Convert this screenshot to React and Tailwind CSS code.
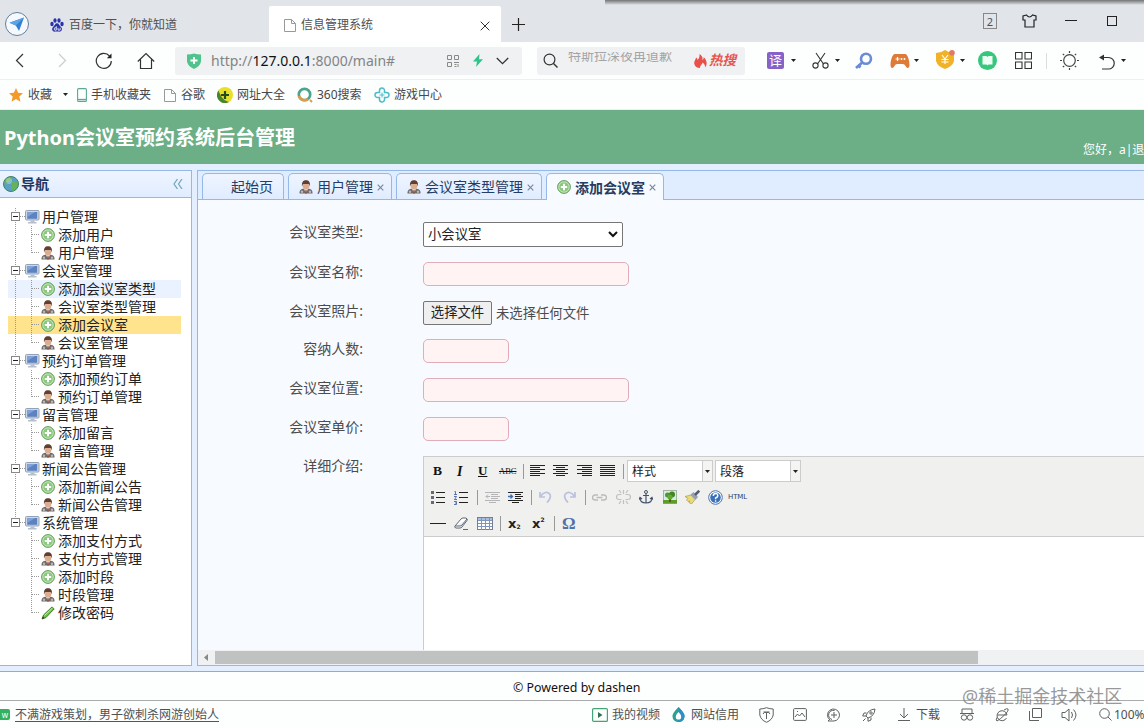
import React from "react";

/* ---------- small shared drawings ---------- */
const Svg = ({ w, h = w, vb, children, className = "" }) => (
  <svg width={w} height={h} viewBox={vb || `0 0 ${w} ${h}`} className={`block shrink-0 ${className}`} fill="none">
    {children}
  </svg>
);
const Cell = ({ c, children }) => <div className={`flex shrink-0 items-center ${c}`}>{children}</div>;
const Caret = () => (
  <Svg w={5} h={3}><path d="M0 0h5L2.500 3z" fill="#222" /></Svg>
);
const Doc = () => (
  <Svg w={12} h={14}>
    <path d="M.5 1.500h7l4 4v8H.5zM7.500 1.500v4h4" stroke="#999" />
  </Svg>
);
const AddIcon = () => (
  <Svg w={14}>
    <circle cx="7" cy="7" r="6.400" fill="#8cc780" stroke="#64a15a" />
    <circle cx="7" cy="7" r="5.200" stroke="#d3edcb" strokeWidth=".8" />
    <path d="M7 3.800v6.400M3.800 7h6.400" stroke="#fff" strokeWidth="2" />
  </Svg>
);
const UserIcon = () => (
  <Svg w={14}>
    <path d="M.5 13.500C.2 10.800 1.500 9.300 4 8.800h6c2.500.5 3.800 2 3.500 4.700z" fill="#6f6b68" />
    <path d="M5 9L7 13l2-4z" fill="#e9e4e0" />
    <path d="M6.500 10h1l.5 3.500H6z" fill="#8b5048" />
    <circle cx="3" cy="11.800" r="1.200" fill="#bdb8b3" /><circle cx="11" cy="11.800" r="1.200" fill="#bdb8b3" />
    <ellipse cx="7" cy="5.600" rx="3.400" ry="4" fill="#dcae91" />
    <path d="M3 6.200C2.600 2 4.200.2 7 .2s4.400 1.800 4 6L10 4H4z" fill="#5f4033" />
  </Svg>
);
const PcIcon = () => (
  <Svg w={15} h={14}>
    <rect x=".5" y=".5" width="13.500" height="9.500" rx="1" fill="#cfd8e6" stroke="#94a2b7" />
    <rect x="2.200" y="2" width="10" height="6.800" fill="#5c82c0" />
    <path d="M2.200 2h8l-8 5z" fill="#7fa2d8" />
    <path d="M5.500 10.500h4v1.500h2v1.500h-8.500V12h2.500z" fill="#b6bfcc" />
  </Svg>
);
const PencilIcon = () => (
  <Svg w={14}>
    <path d="M1 13l1.500-4L11 .9l2.200 2L5 11.500z" fill="#6fc043" stroke="#37732a" strokeWidth=".9" />
    <path d="M3.500 9.500l8-7.500" stroke="#c4efaa" /><path d="M1 13l1-2.500L3.600 12z" fill="#333" />
  </Svg>
);

/* ---------- browser chrome ---------- */
function WindowTabs() {
  return (
    <div className="relative flex h-[42px] shrink-0 items-center bg-[#e1e4e9] text-[12px] text-[#505050]">
      <div className="absolute left-[605px] right-0 top-0 h-[5px] bg-gradient-to-b from-[#747577] to-[#e1e4e9]" />
      <Cell c="w-[50px] pl-[4px] pt-[6px]">
        <Svg w={26}>
          <circle cx="13" cy="13" r="11.500" fill="#f5f9fd" stroke="#627f9d" />
          <path d="M5.500 11.700L20 6.500l-5 13.500-3.200-5.500z" fill="#3280d2" /><path d="M5.500 11.700L20 6.500l-8.200 8z" fill="#5ba4e5" />
        </Svg>
      </Cell>
      <Cell c="w-[19px] pt-[8px]">
        <Svg w={14}>
          <ellipse cx="2" cy="6" rx="1.700" ry="2.200" fill="#2932a8" /><ellipse cx="5" cy="2.500" rx="1.600" ry="2.300" fill="#2932a8" />
          <ellipse cx="9" cy="2.500" rx="1.600" ry="2.300" fill="#2932a8" /><ellipse cx="12" cy="6" rx="1.700" ry="2.200" fill="#2932a8" />
          <path d="M7 5.300c2 0 2 2 3.700 3.500 3 2.700 0 5.500-2.200 4.800-1-.3-2-.3-3 0-2.300.6-5-2.200-2.200-4.800C5 7.300 5 5.300 7 5.300z" fill="#2932a8" />
          <path d="M6.300 8.200v4H4.700q-1.200-1.200 0-2.400h1.600M8 9.800v2.300h2.200V9.800" stroke="#fff" strokeWidth=".8" />
        </Svg>
      </Cell>
      <Cell c="w-[200px] pt-[7px]"><span>百度一下，你就知道</span></Cell>
      <div className="mt-[6px] flex h-[36px] w-[232px] shrink-0 items-center rounded-t-[2px] bg-white">
        <Cell c="w-[32px] pl-[15px] pt-[2px]"><Doc /></Cell>
        <Cell c="w-[179px] pt-[2px]">信息管理系统</Cell>
        <Cell c="w-[20px] pt-[3px]"><Svg w={10}><path d="M.7.7l8.600 8.600M9.300.7L.7 9.300" stroke="#333" /></Svg></Cell>
      </div>
      <Cell c="w-[482px] pl-[11px] pt-[7px]"><Svg w={13}><path d="M6.500 0v13M0 6.500h13" stroke="#222" strokeWidth="1.200" /></Svg></Cell>
      <Cell c="w-[39px]"><span className="flex h-[16px] w-[14px] items-center justify-center border border-[#888] text-[11px] leading-none">2</span></Cell>
      <Cell c="w-[43px]">
        <Svg w={15} h={14}><path d="M4.500 1L1 2v4h2v7h9V6h2V2l-3.500-1Q9 3 7.500 3T4.500 1z" stroke="#222" strokeWidth="1.200" /></Svg>
      </Cell>
      <Cell c="w-[42px]"><Svg w={12} h={2}><path d="M0 .5h12" stroke="#222" /></Svg></Cell>
      <Cell c="w-[12px]"><span className="h-[10px] w-[10px] border border-[#222]" /></Cell>
    </div>
  );
}

function AddressRow() {
  return (
    <div className="flex h-[38px] shrink-0 items-center border-b border-[#eeeff1] bg-[#fdfefe]">
      <Cell c="w-[42px] pl-[15px]"><Svg w={9} h={15}><path d="M8 1L1.500 7.500 8 14" stroke="#333" strokeWidth="1.200" /></Svg></Cell>
      <Cell c="w-[53px] pl-[16px]"><Svg w={9} h={15}><path d="M1 1l6.500 6.500L1 14" stroke="#ccc" strokeWidth="1.200" /></Svg></Cell>
      <Cell c="w-[42px]">
        <Svg w={18}><path d="M14.500 4A7.500 7.500 0 1 0 16.300 9" stroke="#333" strokeWidth="1.200" /><path d="M16.500 1.500v4.700h-4.700z" fill="#222" /></Svg>
      </Cell>
      <Cell c="w-[38px]">
        <Svg w={18}><path d="M.8 9.500L9 1.500l8.200 8M3.500 7.500v9h11v-9" stroke="#333" strokeWidth="1.200" /></Svg>
      </Cell>
      <div className="flex h-[28px] w-[347px] shrink-0 items-center rounded-[3px] bg-[#f0f1f2]">
        <Cell c="w-[36px] pl-[12px]">
          <Svg w={14} h={16}><path d="M0 1.500Q4 1.500 7 .5q3 1 7 1v7Q13 13.500 7 16 1 13.500 0 8.500z" fill="#50c38c" /><path d="M7 4v7M3.500 7.500h7" stroke="#fff" strokeWidth="1.800" /></Svg>
        </Cell>
        <Cell c="w-[236px]"><span className="whitespace-nowrap text-[14px] text-[#828486]">http://<span className="text-[#111]">127.0.0.1</span>:8000/main#</span></Cell>
        <Cell c="w-[26px]">
          <Svg w={12}>
            <path d="M.5.5h4v4h-4zM7.500.5h4v4h-4zM.5 7.500h4v4h-4zM7 7.500h5M7.500 9.500h2M11 9v3M7.500 11.500h2" stroke="#888" />
          </Svg>
        </Cell>
        <Cell c="w-[23px]"><Svg w={10} h={13}><path d="M6.500 0L0 7.500h4L3 13l7-7.800H6z" fill="#2ec58a" /></Svg></Cell>
        <Cell c="w-[14px]"><Svg w={13} h={8}><path d="M.8 1l5.700 5.700L12.200 1" stroke="#333" strokeWidth="1.300" /></Svg></Cell>
      </div>
      <div className="ml-[15px] flex h-[28px] w-[208px] shrink-0 items-center rounded-[3px] bg-[#f0f1f2]">
        <Cell c="w-[31px] pl-[6px]"><Svg w={15}><circle cx="6.500" cy="6.500" r="5.400" stroke="#333" strokeWidth="1.200" /><path d="M10.500 10.500l4 4" stroke="#333" strokeWidth="1.400" /></Svg></Cell>
        <div className="mb-[7px] flex h-[10px] w-[126px] shrink-0 items-end overflow-hidden text-[13px] leading-[13px] text-[#a2a4a6]">特斯拉深夜再道歉</div>
        <Cell c="w-[15px]"><Svg w={13} h={14}><path d="M5.500 0c3 2 3.500 4 2.700 6C9.500 5.500 10 4 9.500 3 12.500 5.500 14 10 11 13.500c.3-2.500-1-4-2.500-5C8.500 10.500 6 11 6 14c-3 0-5-1.500-5.700-4C-.3 7 2 5.500 2 3.500c1 .5 1.500 1.500 1.500 2.500C5 4.500 5.800 2.500 5.500 0z" fill="#e8504c" /></Svg></Cell>
        <span className="whitespace-nowrap pt-[1px] text-[13.500px] font-bold italic leading-none text-[#e65550]">热搜</span>
      </div>
      <Cell c="w-[45px] pl-[22px]"><span className="flex h-[17px] w-[17px] items-center justify-center rounded-[2px] bg-[#8763c8] text-[13px] leading-none text-white">译</span></Cell>
      <Cell c="w-[22px] pl-[1px]"><Caret /></Cell>
      <Cell c="w-[23px]">
        <Svg w={17}><path d="M4 1l7.500 11M13 1L5.500 12" stroke="#333" strokeWidth="1.100" /><circle cx="3.500" cy="13.500" r="2.600" stroke="#333" strokeWidth="1.100" /><circle cx="13.500" cy="13.500" r="2.600" stroke="#333" strokeWidth="1.100" /></Svg>
      </Cell>
      <Cell c="w-[20px]"><Caret /></Cell>
      <Cell c="w-[35px]">
        <Svg w={18}><circle cx="11" cy="6.800" r="5" stroke="#6b8bd4" strokeWidth="2.600" /><path d="M7.500 10.300L1 16M3.500 13.500l2 2" stroke="#6b8bd4" strokeWidth="2.800" /></Svg>
      </Cell>
      <Cell c="w-[24px]">
        <Svg w={20} h={16}><path d="M5 1h10c3 0 4.500 7.500 4.500 11 0 3.500-2.500 4-4 1Q14.500 11 13 11H7Q5.500 11 4.500 13c-1.500 3-4 2.500-4-1C.5 8.500 2 1 5 1z" fill="#df7b39" /><path d="M7.500 4v4M5.500 6h4" stroke="#fff" strokeWidth="1.200" /><circle cx="11.500" cy="6" r="1" fill="#fff" /><circle cx="14.500" cy="6" r="1" fill="#fff" /></Svg>
      </Cell>
      <Cell c="w-[22px]"><Caret /></Cell>
      <Cell c="w-[24px] pb-[2px]">
        <Svg w={19}><path d="M0 3Q5 3 9 0q4 3 9 3v8q-1.500 5.500-9 8Q1.500 16.500 0 11z" fill="#f1b229" /><path d="M6 5l3 4 3-4M9 9v5M5.500 9.500h7M5.500 12h7" stroke="#fff" strokeWidth="1.100" /><circle cx="16" cy="2.800" r="2.800" fill="#df7a63" /></Svg>
      </Cell>
      <Cell c="w-[18px]"><Caret /></Cell>
      <Cell c="w-[37px]">
        <Svg w={19}><circle cx="9.500" cy="9.500" r="9.500" fill="#35c77c" /><path d="M4.500 5h4l1 1 1-1h4v8.500h-4l-1 1-1-1h-4z" fill="#f0fff6" /></Svg>
      </Cell>
      <Cell c="w-[31px]"><Svg w={17}><path d="M.5.5h6.500V7H.5zM10 .5h6.500V7H10zM.5 10h6.500v6.500H.5zM10 10h6.500v6.500H10z" stroke="#333" strokeWidth="1.100" /></Svg></Cell>
      <Cell c="w-[14px]"><span className="h-[16px] w-px bg-[#ddd]" /></Cell>
      <Cell c="w-[39px]">
        <Svg w={19}><circle cx="9.500" cy="9.500" r="5.800" stroke="#444" strokeWidth="1.200" /><path d="M9.500 0v2M9.500 17v2M0 9.500h2M17 9.500h2M2.800 2.800l1.400 1.400M14.800 14.800l1.400 1.400M16.200 2.800l-1.400 1.400M4.200 14.800l-1.400 1.400" stroke="#444" strokeWidth="1.200" /></Svg>
      </Cell>
      <Cell c="w-[22px] pt-[2px]"><Svg w={17} h={16}><path d="M2 3.500h7.500a5.700 5.700 0 0 1 0 11.500H3" stroke="#333" strokeWidth="1.200" /><path d="M5 .5v6L0 3.500z" fill="#333" /></Svg></Cell>
      <Caret />
    </div>
  );
}

function Bookmarks() {
  return (
    <div className="flex h-[30px] shrink-0 items-center whitespace-nowrap border-b border-[#dff6f3] bg-[#fdfefe] text-[12px] text-[#484848]">
      <Cell c="w-[28px] pl-[9px]"><Svg w={14}><path d="M7 0l2.100 4.700 4.900.5-3.700 3.300 1.100 5.200L7 11l-4.400 2.700 1.100-5.200L0 5.200l4.900-.5z" fill="#f39a28" /></Svg></Cell>
      <Cell c="w-[35px]">收藏</Cell>
      <Cell c="w-[14px]"><Caret /></Cell>
      <Cell c="w-[14px]"><Svg w={10} h={14}><rect x=".6" y=".6" width="8.800" height="12.800" rx="1" stroke="#5ba993" strokeWidth="1.100" /><path d="M1 11.500h8" stroke="#5ba993" strokeWidth="1.300" /></Svg></Cell>
      <Cell c="w-[73px]">手机收藏夹</Cell>
      <Cell c="w-[17px]"><Doc /></Cell>
      <Cell c="w-[36px]">谷歌</Cell>
      <Cell c="w-[20px]">
        <Svg w={16}><circle cx="8" cy="8" r="8" fill="#e9df29" /><path d="M1.500 3.500A8 8 0 0 0 12 15c-4-1-8-4-10.500-11.500z" fill="#48842b" /><path d="M8 4v8M4 8h8" stroke="#244b20" strokeWidth="2.200" /></Svg>
      </Cell>
      <Cell c="w-[60px]">网址大全</Cell>
      <Cell c="w-[20px]">
        <Svg w={16}><circle cx="7.500" cy="7.500" r="5.700" stroke="#4ba58e" strokeWidth="2.700" /><path d="M2 9a5.700 5.700 0 0 0 9 3" stroke="#e29a48" strokeWidth="2.700" /><path d="M13 13l2 2" stroke="#e29a48" strokeWidth="2" /></Svg>
      </Cell>
      <Cell c="w-[57px]">360搜索</Cell>
      <Cell c="w-[20px]"><Svg w={16}><path d="M5.500 5.500V3.500a2.500 2.500 0 0 1 5 0v2h2a2.500 2.500 0 0 1 0 5h-2v2a2.500 2.500 0 0 1-5 0v-2h-2a2.500 2.500 0 0 1 0-5z" stroke="#4dbcc6" strokeWidth="1.500" /><path d="M8 5.500v5M5.500 8h5" stroke="#4dbcc6" /></Svg></Cell>
      <Cell c="w-[60px]">游戏中心</Cell>
    </div>
  );
}

/* ---------- navigation tree ---------- */
const TREE = [
  ["用户管理", [["添加用户", "add"], ["用户管理", "user"]]],
  ["会议室管理", [["添加会议室类型", "add", "hover"], ["会议室类型管理", "user"], ["添加会议室", "add", "active"], ["会议室管理", "user"]]],
  ["预约订单管理", [["添加预约订单", "add"], ["预约订单管理", "user"]]],
  ["留言管理", [["添加留言", "add"], ["留言管理", "user"]]],
  ["新闻公告管理", [["添加新闻公告", "add"], ["新闻公告管理", "user"]]],
  ["系统管理", [["添加支付方式", "add"], ["支付方式管理", "user"], ["添加时段", "add"], ["时段管理", "user"], ["修改密码", "pencil"]]],
];
const ROW_BG = { hover: "bg-[#eaf2ff]", active: "bg-[#ffe48d]" };
const ICONS = { add: AddIcon, user: UserIcon, pencil: PencilIcon };

function Parent({ label, last }) {
  return (
    <div className="flex h-[18px] items-center">
      <Svg w={17} h={18}>
        <path d={last ? "M7.500 0v9" : "M7.500 0v18"} stroke="#999" strokeDasharray="1 1" />
        <path d="M12 8.500h5" stroke="#999" strokeDasharray="1 1" />
        <rect x="3.500" y="4.500" width="8" height="8" fill="#fff" stroke="#888" />
        <path d="M5 8.500h5" stroke="#222" />
      </Svg>
      <PcIcon />
      <span className="ml-[2px]">{label}</span>
    </div>
  );
}
function Child({ item, lastGroup, lastChild }) {
  const Icon = ICONS[item[1]];
  return (
    <div className={`flex h-[18px] items-center ${ROW_BG[item[2]] || ""}`}>
      <Svg w={33} h={18}>
        {!lastGroup && <path d="M7.500 0v18" stroke="#999" strokeDasharray="1 1" />}
        <path d={lastChild ? "M23.500 0v9" : "M23.500 0v18"} stroke="#999" strokeDasharray="1 1" />
        <path d="M24 8.500h8" stroke="#999" strokeDasharray="1 1" />
      </Svg>
      <Icon />
      <span className="ml-[3px]">{item[0]}</span>
    </div>
  );
}
function Sidebar() {
  return (
    <div className="flex w-[192px] shrink-0 flex-col border-y border-r border-[#95b8e7] bg-white">
      <div className="flex h-[27px] shrink-0 items-center border-b border-[#95b8e7] bg-gradient-to-b from-[#eff5ff] to-[#e0ecff] text-[14px] font-bold text-[#1a3763]">
        <Cell c="w-[21px] pl-[3px]">
          <Svg w={16}><circle cx="8" cy="8" r="7.500" fill="#5a9fc4" stroke="#3f8360" /><path d="M3 3q3-3 6-1L7 5 4 6 3 9 1 8zM8 7l4-2 3 2-1 5-4 3-2-3z" fill="#63b35a" /><circle cx="6" cy="5" r="3" fill="#fff" opacity=".3" /></Svg>
        </Cell>
        <Cell c="w-[152px] pb-[2px]">导航</Cell>
        <Svg w={10}><path d="M4.500 0L1 5l3.500 5M9 0L5.500 5 9 10" stroke="#6ba6b9" strokeWidth="1.200" /></Svg>
      </div>
      <div className="ml-[8px] mr-[10px] mt-[10px] text-[14px] leading-[18px] text-[#222]">
        {TREE.map(([label, kids], g) => (
          <div key={g}>
            <Parent label={label} last={g === TREE.length - 1} />
            {kids.map((k, i) => (
              <Child key={i} item={k} lastGroup={g === TREE.length - 1} lastChild={i === kids.length - 1} />
            ))}
          </div>
        ))}
      </div>
    </div>
  );
}

/* ---------- content ---------- */
const TAB = "flex h-[26px] shrink-0 items-center whitespace-nowrap rounded-t-[5px] border border-b-0 border-[#95b8e7] bg-gradient-to-b from-[#eff5ff] to-[#e0ecff] text-[14px] text-[#253c63]";
const TabClose = () => <Svg w={7} className="ml-[4px] mt-[1px]"><path d="M.7.7l5.600 5.600M6.300.7L.7 6.300" stroke="#76839a" strokeWidth="1.100" /></Svg>;
function PageTabs() {
  return (
    <div className="flex h-[29px] shrink-0 items-end border-b border-[#95b8e7] bg-[#e0ecff] pl-[4px]">
      <div className={`${TAB} w-[82px] pl-[28px]`}>起始页</div>
      <div className={`${TAB} ml-[4px] w-[104px] pl-[10px]`}><UserIcon /><span className="ml-[4px]">用户管理</span><TabClose /></div>
      <div className={`${TAB} ml-[4px] w-[146px] pl-[10px]`}><UserIcon /><span className="ml-[4px]">会议室类型管理</span><TabClose /></div>
      <div className="-mb-px ml-[4px] flex h-[27px] w-[118px] shrink-0 items-center whitespace-nowrap rounded-t-[5px] border border-b-0 border-[#95b8e7] bg-[#f7faff] pl-[10px] text-[14px] font-bold text-[#253c63]">
        <AddIcon /><span className="ml-[4px]">添加会议室</span><TabClose />
      </div>
    </div>
  );
}

const Field = ({ label, h, children }) => (
  <div className={`flex shrink-0 items-start ${h}`}>
    <div className="w-[165px] shrink-0 text-right text-[14px] leading-[20px] text-[#4c4c4c]">{label}</div>
    <div className="ml-[60px] flex min-w-0 flex-1">{children}</div>
  </div>
);
const PINK = "rounded-[5px] border border-[#e0adb9] bg-[#fff3f3] outline-none";

const Sep = () => <span className="h-[15px] w-px bg-[#999]" />;
const Lines = ({ widths, side = "l", w = 15, color = "#222" }) => (
  <Svg w={w} h={12}>
    {widths.map((n, i) => {
      const x = side === "l" ? 0 : side === "r" ? w - n : Math.floor((w - n) / 2);
      return <path key={i} d={`M${x} ${i * 2 + 0.5}h${n}`} stroke={color} />;
    })}
  </Svg>
);
const Combo = ({ children }) => (
  <div className="flex h-[22px] w-[86px] items-stretch border border-[#ccc] bg-white text-[12px] text-[#222]">
    <span className="flex flex-1 items-center pl-[4px]">{children}</span>
    <span className="flex w-[10px] items-center justify-center border-l border-[#ccc] bg-[#f4f4f2]"><Caret /></span>
  </div>
);

function Editor() {
  return (
    <div className="flex h-[194px] w-full flex-col border-l border-t border-[#ccc] bg-white">
      <div className="h-[80px] shrink-0 border-b border-[#ccc] bg-[#f0f0ee] pt-[1px]">
        <div className="flex h-[26px] items-center font-['Liberation_Serif'] text-[#111]">
          <Cell c="w-[23px] pl-[9px] text-[13.500px] font-black">B</Cell>
          <Cell c="w-[24px] pl-[10px] text-[14px] font-bold italic">I</Cell>
          <Cell c="w-[24px] pl-[7px] text-[13px] font-bold underline">U</Cell>
          <Cell c="w-[28px] pl-[4px] text-[8.500px] line-through">ABC</Cell>
          <Cell c="w-[7px]"><Sep /></Cell>
          <Cell c="w-[23px]"><Lines widths={[15, 10, 15, 10, 15, 10]} /></Cell>
          <Cell c="w-[24px]"><Lines widths={[15, 9, 15, 9, 15, 9]} side="c" /></Cell>
          <Cell c="w-[23px]"><Lines widths={[15, 10, 15, 10, 15, 10]} side="r" /></Cell>
          <Cell c="w-[23px]"><Lines widths={[15, 15, 15, 15, 15, 15]} /></Cell>
          <Cell c="w-[4px]"><Sep /></Cell>
          <div className="flex gap-[2px] font-['Noto_Sans_CJK_SC',sans-serif]"><Combo>样式</Combo><Combo>段落</Combo></div>
        </div>
        <div className="flex h-[26px] items-center">
          <Cell c="w-[30px] pl-[7px]">
            <Svg w={14} h={13}><path d="M5 1.500h9M5 6.500h9M5 11.500h9" stroke="#222" /><path d="M0 0h3v3H0zM0 5h3v3H0zM0 10h3v3H0z" fill="#666a72" /></Svg>
          </Cell>
          <Cell c="w-[23px]">
            <Svg w={14} h={15}><path d="M5 2.500h9M5 7.500h9M5 12.500h9" stroke="#222" /><path d="M.5 1.500h1v3M0 4.500h3M0 6.500h2.500L.5 9.500H3M0 11.500h2.500v3H0M1 13h1" stroke="#4a65a1" strokeWidth=".9" /></Svg>
          </Cell>
          <Cell c="w-[8px]"><Sep /></Cell>
          <Cell c="w-[23px]">
            <Svg w={15} h={13}><path d="M0 1.500h15M6 3.500h7M6 5.500h9M6 7.500h7M0 9.500h15M4 11.500h7M1 5.500h4M3 3.500L1 5.500l2 2" stroke="#b5b5b8" /></Svg>
          </Cell>
          <Cell c="w-[23px]">
            <Svg w={15} h={13}><path d="M0 1.500h15M7 3.500h6M7 5.500h8M7 7.500h6M0 9.500h15M4 11.500h7" stroke="#222" /><path d="M0 5.500h4M2.500 3.500l2 2-2 2" stroke="#426eb0" strokeWidth="1.300" /></Svg>
          </Cell>
          <Cell c="w-[8px]"><Sep /></Cell>
          <Cell c="w-[24px]"><Svg w={13} h={12}><path d="M1 1v5h5M1.500 5.500C4 1 9 0 11 3.500c1.500 3.500-1 6-3 8" stroke="#bbc1df" strokeWidth="1.700" /></Svg></Cell>
          <Cell c="w-[22px]"><Svg w={13} h={12}><path d="M12 1v5H7M11.500 5.500C9 1 4 0 2 3.500.5 7 3 9.500 5 11.500" stroke="#bbc1df" strokeWidth="1.700" /></Svg></Cell>
          <Cell c="w-[7px]"><Sep /></Cell>
          <Cell c="w-[24px]"><Svg w={15} h={9}><path d="M6 2H3a2.500 2.500 0 0 0 0 5h3M9 2h3a2.500 2.500 0 0 1 0 5H9M4.500 4.500h6" stroke="#bbb" strokeWidth="1.400" /></Svg></Cell>
          <Cell c="w-[23px]"><Svg w={15} h={14}><path d="M5.500 4.500H3a2.500 2.500 0 0 0 0 5h2.500M9.500 4.500H12a2.500 2.500 0 0 1 0 5H9.500M7.500 0v4M7.500 10v4M3 0l2 3M12 0l-2 3M3 14l2-3M12 14l-2-3" stroke="#c0c0c0" strokeWidth="1.200" /></Svg></Cell>
          <Cell c="w-[24px]">
            <Svg w={14}><circle cx="7" cy="2" r="1.500" stroke="#44536c" /><path d="M7 3.500V13M4 5.500h6M1 8c0 3.500 3 5 6 5s6-1.500 6-5M0 9.500L1 7.500l2 1.500M14 9.500l-1-2L11 9" stroke="#44536c" strokeWidth="1.200" /></Svg>
          </Cell>
          <Cell c="w-[22px]">
            <Svg w={14}><rect x=".5" y=".5" width="13" height="13" fill="#d6eaf0" stroke="#a3b59f" /><rect y="10" width="14" height="3.500" fill="#5c9c27" /><path d="M7 7v5" stroke="#63512a" strokeWidth="2" /><circle cx="4.500" cy="5" r="2.500" fill="#4f972b" /><circle cx="9" cy="4.500" r="3" fill="#3f8622" /><circle cx="7" cy="7" r="2.600" fill="#62a932" /></Svg>
          </Cell>
          <Cell c="w-[23px]">
            <Svg w={15} h={14}><path d="M0 6.500L6 5l4 4.500L6.500 14 4 12.500l1-1.500-2 .5L1.500 10 3 8.500z" fill="#eadb76" stroke="#a99a4f" strokeWidth=".7" /><path d="M5.500 4.500l5 5.500 2.500-3L8.500 2z" fill="#97a0b2" /><path d="M10 5L14.300.7" stroke="#525d73" strokeWidth="2.600" /></Svg>
          </Cell>
          <Cell c="w-[20px]">
            <Svg w={15}><circle cx="7.500" cy="7.500" r="6.800" fill="#fff" stroke="#4a72ae" /><circle cx="7.500" cy="7.500" r="5.300" fill="#3970bc" /><path d="M5.300 6q0-2.500 2.300-2.500T9.800 6q0 1-2.200 2v1.200M7.600 10.300v1.500" stroke="#fff" strokeWidth="1.400" /></Svg>
          </Cell>
          <span className="font-['DejaVu_Sans'] text-[7px] leading-none tracking-[-0.1px] text-[#29436c]">HTML</span>
        </div>
        <div className="flex h-[26px] items-center">
          <Cell c="w-[30px] pl-[6px]"><Svg w={16} h={1}><path d="M0 .5h16" stroke="#222" /></Svg></Cell>
          <Cell c="w-[23px]"><Svg w={15} h={13}><path d="M1 9l6-7q1-1 2-1h3q2 1 1 2.500L8 10q-1 1-2 1H2Q0 10.500 1 9zM1.500 9H6q1 0 2-1l5-6M9 12.500h5" stroke="#5e6675" fill="#fff" /></Svg></Cell>
          <Cell c="w-[23px]">
            <Svg w={16} h={13}><rect x=".5" y=".5" width="15" height="12" fill="#fff" stroke="#718096" /><path d="M1 1h14v2H1z" fill="#a9bfde" /><path d="M1 3.500h14M1 6.500h14M1 9.500h14M4.500 1v12M8.500 1v12M12.500 1v12" stroke="#8095bd" /></Svg>
          </Cell>
          <Cell c="w-[8px]"><Sep /></Cell>
          <Cell c="w-[24px] font-['DejaVu_Sans'] text-[13px] font-bold leading-none text-[#222]">x<span className="translate-y-[4px] text-[6px]">2</span></Cell>
          <Cell c="w-[22px] font-['DejaVu_Sans'] text-[13px] font-bold leading-none text-[#222]">x<span className="-translate-y-[3px] text-[6px]">2</span></Cell>
          <Cell c="w-[8px]"><Sep /></Cell>
          <span className="font-['Liberation_Serif'] text-[17px] font-bold leading-none text-[#5470a6]">Ω</span>
        </div>
      </div>
    </div>
  );
}

function Content() {
  return (
    <div className="ml-[5px] flex min-w-0 flex-1 flex-col overflow-hidden border-y border-l border-[#95b8e7] bg-[#f7faff]">
      <PageTabs />
      <div className="flex min-h-0 flex-1 flex-col overflow-hidden pt-[22px]">
        <Field label="会议室类型:" h="h-[40px]">
          <div className="flex h-[25px] w-[200px] items-center justify-between rounded-[2px] border border-[#767676] bg-white pl-[4px] pr-[4px] text-[13.333px] text-[#222]">
            小会议室<Svg w={10} h={7}><path d="M1 1l4 4 4-4" stroke="#111" strokeWidth="2" /></Svg>
          </div>
        </Field>
        <Field label="会议室名称:" h="h-[39px]"><input className={`${PINK} h-[24px] w-[206px]`} /></Field>
        <Field label="会议室照片:" h="h-[38px]">
          <div className="flex items-center text-[13.333px] leading-none text-[#4c4c4c]">
            <button className="h-[24px] w-[69px] rounded-[2px] border border-[#767676] bg-[#efefef] text-[#222]">选择文件</button>
            <span className="ml-[4px] pt-[1px]">未选择任何文件</span>
          </div>
        </Field>
        <Field label="容纳人数:" h="h-[39px]"><input className={`${PINK} h-[24px] w-[86px]`} /></Field>
        <Field label="会议室位置:" h="h-[39px]"><input className={`${PINK} h-[24px] w-[206px]`} /></Field>
        <Field label="会议室单价:" h="h-[39px]"><input className={`${PINK} h-[24px] w-[86px]`} /></Field>
        <Field label="详细介绍:" h="h-[194px]"><Editor /></Field>
      </div>
      <div className="flex h-[15px] shrink-0 items-center bg-[#f0f1f2]">
        <Cell c="w-[17px] pl-[6px]"><Svg w={4} h={7}><path d="M4 0v7L0 3.500z" fill="#888" /></Svg></Cell>
        <div className="h-[13px] w-[763px] bg-[#c0c1c1]" />
      </div>
    </div>
  );
}

function StatusBar() {
  const s = { stroke: "#606060", strokeWidth: 1 };
  return (
    <div className="flex h-[28px] shrink-0 items-center whitespace-nowrap border-t border-[#aaabac] bg-[#fdfefe] text-[12px] text-[#505050]">
      <Cell c="w-[15px]"><span className="flex h-[11px] w-[10px] items-center justify-center rounded-r-[2px] bg-[#32b15f] text-[8px] leading-none text-white">w</span></Cell>
      <Cell c="w-[577px]"><span className="border-b border-[#555] leading-[13px]">不满游戏策划，男子欲刺杀网游创始人</span></Cell>
      <Cell c="w-[20px]"><Svg w={16} h={14}><rect x=".6" y=".6" width="14.800" height="12.800" rx="1" stroke="#46a575" strokeWidth="1.200" /><path d="M6 4l4.500 3L6 10z" fill="#32704f" /></Svg></Cell>
      <Cell c="w-[60px]">我的视频</Cell>
      <Cell c="w-[19px]"><Svg w={13} h={15}><path d="M6.500 0Q13 6.500 12.500 9.500A6 5.500 0 0 1 .5 9.500Q0 6.500 6.500 0z" fill="#2ba18f" /><path d="M6.500 0Q13 6.500 12.500 9.500A6 5.500 0 0 1 6.500 15z" fill="#2d8fc4" /><path d="M6.500 5q3 3 2.700 5a2.700 2.600 0 0 1-5.400 0Q3.500 8 6.500 5z" fill="#fff" /></Svg></Cell>
      <Cell c="w-[68px]">网站信用</Cell>
      <Cell c="w-[34px]"><Svg w={15} h={16}><path d="M.8 2Q4 2 7.500.7 11 2 14.200 2v6q-1 5-6.700 7.300Q1.800 13 .8 8zM7.500 12V5.500M4 7q1-2.500 3.500-1.500M11 7Q10 4.500 7.500 5.500M4.500 5h6" {...s} /></Svg></Cell>
      <Cell c="w-[34px]"><Svg w={14} h={13}><rect x=".6" y=".6" width="12.800" height="11.800" rx="1" {...s} /><path d="M2 9l2.500-3 2 2 2.500-3 3 4M4 3.500h1" {...s} /></Svg></Cell>
      <Cell c="w-[35px]"><Svg w={14}><path d="M2.500 11.500A6 6 0 1 1 7 13H1l2-2" {...s} /><path d="M7 4v6M4 7h6M7.500 2.500A4.500 4.500 0 0 0 5 11.500" {...s} /></Svg></Cell>
      <Cell c="w-[36px]"><Svg w={14}><path d="M4 8Q6 1.500 13 1q-.5 7-7 9zM4.500 5H2L.7 8H4M9 9.500V12l-3 1.300V10M1 13l2.500-2.500" {...s} /><circle cx="9" cy="5" r="1.200" {...s} /></Svg></Cell>
      <Cell c="w-[18px]"><Svg w={12} h={13}><path d="M6 0v10M2 6l4 4 4-4M0 12.500h12" {...s} /></Svg></Cell>
      <Cell c="w-[44px]">下载</Cell>
      <Cell c="w-[35px]"><Svg w={14} h={13}><path d="M2 5V1h10v4M0 5.500h14" {...s} /><circle cx="4" cy="9.500" r="2.700" {...s} /><circle cx="10" cy="9.500" r="2.700" {...s} /></Svg></Cell>
      <Cell c="w-[34px]"><Svg w={14}><path d="M11.500 10A5 5 0 1 1 12 7H2.500M9 2q3-2 4-1 1 1.500-3.500 6T2 13Q.5 12.500 2 9.500" {...s} /></Svg></Cell>
      <Cell c="w-[32px]"><Svg w={13}><path d="M3.500.5h9v9h-9zM.5 3v9.500H10" {...s} /></Svg></Cell>
      <Cell c="w-[38px]"><Svg w={16} h={14}><path d="M1 4.500h3L8 1v12L4 9.500H1zM10.500 4q2 3 0 6M12.500 1.500q5 5.500 0 11" {...s} /></Svg></Cell>
      <Cell c="w-[15px]"><Svg w={13}><circle cx="5.500" cy="5.500" r="4.800" {...s} /><path d="M9 9l3.500 3.500" {...s} /></Svg></Cell>
      <span>100%</span>
    </div>
  );
}

export default function App() {
  return (
    <div className="relative flex h-[728px] w-[1144px] flex-col overflow-hidden bg-white font-['Noto_Sans','Noto_Sans_CJK_SC',sans-serif]">
      <WindowTabs />
      <AddressRow />
      <Bookmarks />
      <div className="flex h-[54px] shrink-0 justify-between overflow-hidden whitespace-nowrap bg-[#6cae86] text-white">
        <h1 className="pl-[4px] text-[20px] font-bold leading-[56px]">Python会议室预约系统后台管理</h1>
        <div className="w-[61px] overflow-hidden pt-[32px] text-[12px] leading-[16px]">您好，a|退出</div>
      </div>
      <div className="flex h-[508px] shrink-0 border-b border-[#8fadcf] bg-[#e3efff] pb-[5px] pt-[6px]">
        <Sidebar />
        <Content />
      </div>
      <div className="flex h-[28px] shrink-0 items-center bg-[#fdfefe] pl-[513px] pt-[5px] text-[12.400px] text-[#111]">© Powered by dashen</div>
      <StatusBar />
      <div className="absolute left-[962px] top-[683px] whitespace-nowrap text-[18px] leading-[26px] text-[#777]/75">@稀土掘金技术社区</div>
    </div>
  );
}
